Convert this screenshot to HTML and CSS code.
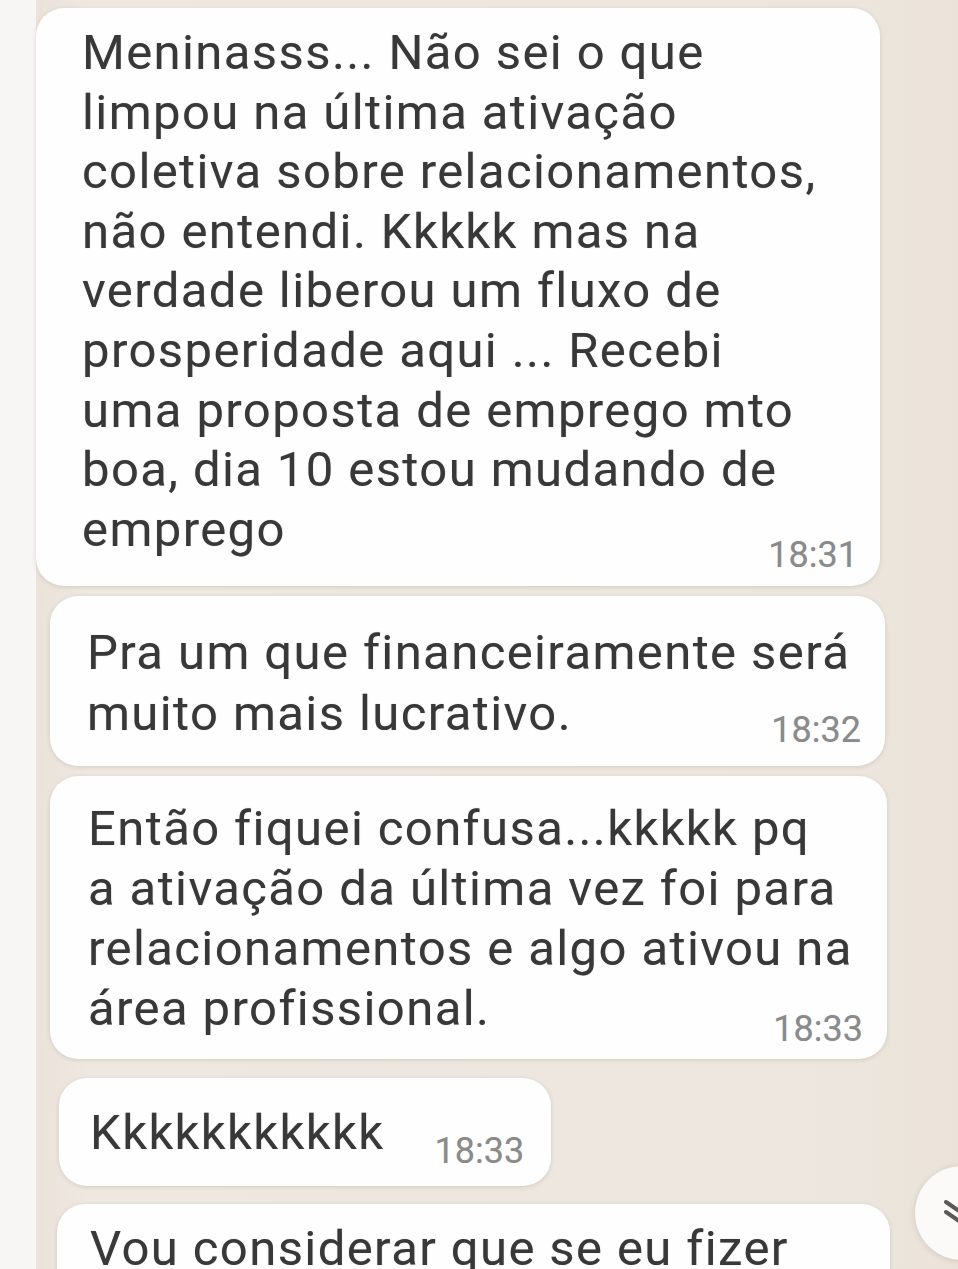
FILE: index.html
```html
<!DOCTYPE html>
<html lang="pt-BR">
<head>
<meta charset="utf-8">
<title>Conversa</title>
<link rel="stylesheet" href="styles.css">
</head>
<body>
<div class="screen">
  <div class="edge"></div>
  <main class="chat">
    <div class="bubble b1">
      <p class="msg">Meninasss... Não sei o que<br>limpou na última ativação<br>coletiva sobre relacionamentos,<br>não entendi. Kkkkk mas na<br>verdade liberou um fluxo de<br>prosperidade aqui ... Recebi<br>uma proposta de emprego mto<br>boa, dia 10 estou mudando de<br>emprego</p>
      <span class="time">18:31</span>
    </div>
    <div class="bubble b2">
      <p class="msg">Pra um que financeiramente será<br>muito mais lucrativo.</p>
      <span class="time">18:32</span>
    </div>
    <div class="bubble b3">
      <p class="msg">Então fiquei confusa...kkkkk pq<br>a ativação da última vez foi para<br>relacionamentos e algo ativou na<br>área profissional.</p>
      <span class="time">18:33</span>
    </div>
    <div class="bubble b4">
      <p class="msg">Kkkkkkkkkkk</p>
      <span class="time">18:33</span>
    </div>
    <div class="bubble b5">
      <p class="msg">Vou considerar que se eu fizer</p>
    </div>
  </main>
  <button class="scroll-down" aria-label="Rolar para baixo">
    <svg width="94" height="94" viewBox="0 0 94 94"><path d="M31 36 L47 47 L63 36 M31 46 L47 57 L63 46" fill="none" stroke="#5a5a5a" stroke-width="4" stroke-linecap="round" stroke-linejoin="round"/></svg>
  </button>
</div>
</body>
</html>
```
FILE: styles.css
```css
html, body {
  margin: 0;
  padding: 0;
  height: 100%;
  overflow: hidden;
}
body {
  background: #f7f5f3;
  font-family: Roboto, "Noto Sans", "Liberation Sans", sans-serif;
}
.screen {
  display: flex;
  height: 1269px;
  position: relative;
  overflow: hidden;
}
.edge {
  width: 36px;
  flex: none;
  background: #f8f6f5;
}
.chat {
  flex: 1;
  background: linear-gradient(90deg, #ebe3da 0, #eee8e1 6%, #ece6de 88%, #ebe3d9 100%);
  display: flex;
  flex-direction: column;
  align-items: flex-start;
  gap: 10px;
  padding-top: 8px;
}
.bubble {
  background: #fefefe;
  border-radius: 28px;
  box-shadow: 0 1px 4px rgba(120, 110, 100, 0.22);
  box-sizing: border-box;
  color: #383838;
  flex: none;
}
.msg {
  margin: 0;
  font-size: 49px;
  line-height: 59.6px;
  white-space: nowrap;
  letter-spacing: 1.4px;
  text-shadow: 0 0 1px rgba(40, 40, 40, 0.35);
}
.time {
  display: block;
  text-align: right;
  font-size: 36px;
  line-height: 36px;
  color: #8a8a8a;
  text-shadow: 0 0 1px rgba(120, 120, 120, 0.3);
}
.b1 {
  width: 844px;
  padding: 15px 22px 13px 46px;
}
.b1 .time { margin-top: -22px; }
.b2 {
  width: 835px;
  margin-left: 14px;
  padding: 26px 24px 18px 37px;
}
.b2 .msg { line-height: 61px; }
.b2 .time { margin-top: -32px; }
.b3 {
  width: 837px;
  margin-left: 14px;
  padding: 23px 24px 12px 38px;
}
.b3 .msg { line-height: 60px; }
.b3 .time { margin-top: -28px; }
.b4 {
  display: flex;
  align-items: flex-end;
  gap: 50px;
  margin-top: 9px;
  margin-left: 23px;
  padding: 25px 27px 23px 31px;
}
.b4 .time { margin-bottom: -6px; }
.b5 {
  width: 833px;
  height: 120px;
  margin-top: 8px;
  margin-left: 21px;
  padding: 15px 22px 0 33px;
}
.scroll-down {
  position: absolute;
  left: 915px;
  top: 1166px;
  width: 94px;
  height: 94px;
  border-radius: 50%;
  border: none;
  background: #fbfaf9;
  box-shadow: 0 1px 6px rgba(0, 0, 0, 0.12);
  padding: 0;
  display: flex;
  align-items: center;
  justify-content: center;
}
.scroll-down svg {
  display: block;
}
```
